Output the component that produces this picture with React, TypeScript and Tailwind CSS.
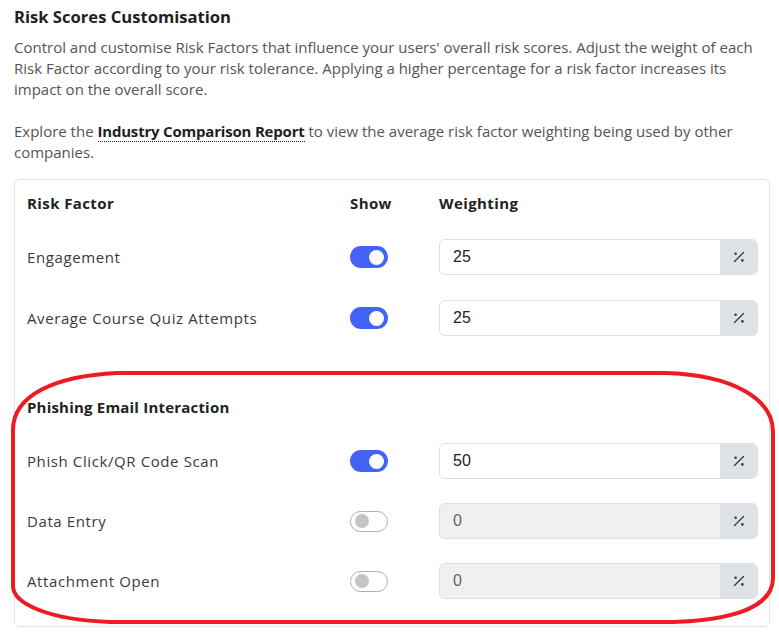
import React from "react";

const font = { fontFamily: '"Open Sans", "Noto Sans", sans-serif' };

function Toggle({ on }: { on: boolean }) {
  return on ? (
    <div className="flex h-[22px] w-[38px] items-center justify-end rounded-full bg-[#4263f5] px-[4px]">
      <div className="h-[15px] w-[15px] rounded-full bg-white" />
    </div>
  ) : (
    <div className="flex h-[21px] w-[38px] items-center justify-start rounded-full border border-[#a9b0b8] bg-white px-[4px]">
      <div className="h-[14px] w-[14px] rounded-full bg-[#c4c4c4]" />
    </div>
  );
}

function PercentIcon() {
  return (
    <svg width="12" height="12" viewBox="0 0 12 12" fill="none">
      <line x1="1.5" y1="10.5" x2="10.5" y2="1.5" stroke="#343a40" strokeWidth="1.3" strokeLinecap="round" />
      <circle cx="2.6" cy="2.8" r="1.3" fill="#343a40" />
      <circle cx="9.4" cy="9.4" r="1.3" fill="#343a40" />
    </svg>
  );
}

function Row({ label, on, value }: { label: string; on: boolean; value: string }) {
  return (
    <div className="grid h-[36px] grid-cols-[323px_89px_319px] items-center">
      <div className="whitespace-nowrap text-[15px] tracking-[0.6px] text-[#3a3a3a]" style={font}>
        {label}
      </div>
      <div>
        <Toggle on={on} />
      </div>
      <div
        className={`flex h-[36px] overflow-hidden rounded-[6px] border border-[#dcdfe3] ${
          on ? "bg-white" : "bg-[#eff0f2]"
        }`}
      >
        <div
          className={`flex flex-1 items-center pl-[13px] text-[16px] ${on ? "text-[#222]" : "text-[#666]"}`}
          style={{ fontFamily: '"Liberation Sans", Arial, sans-serif' }}
        >
          {value}
        </div>
        <div className="flex w-[37px] items-center justify-center bg-[#dee2e6]">
          <PercentIcon />
        </div>
      </div>
    </div>
  );
}

export default function App() {
  return (
    <div className="relative h-[643px] w-[779px] overflow-hidden bg-white" style={font}>
      <div className="pl-[14px] pt-[5px]">
        <h1 className="text-[16.6px] font-bold leading-[24px] text-[#1f1f1f]">Risk Scores Customisation</h1>
        <p className="mt-[8px] text-[15px] leading-[21px] text-[#555]">
          <span className="block whitespace-nowrap">
            Control and customise Risk Factors that influence your users' overall risk scores. Adjust the weight of each
          </span>
          <span className="block whitespace-nowrap">
            Risk Factor according to your risk tolerance. Applying a higher percentage for a risk factor increases its
          </span>
          <span className="block whitespace-nowrap">impact on the overall score.</span>
        </p>
        <p className="mt-[21px] text-[15px] leading-[21px] text-[#555]">
          <span className="block whitespace-nowrap">
            Explore the{" "}
            <span className="border-b border-dotted border-[#222] font-bold tracking-[-0.2px] text-[#1f1f1f]">
              Industry Comparison Report
            </span>{" "}
            to view the average risk factor weighting being used by other
          </span>
          <span className="block whitespace-nowrap">companies.</span>
        </p>
        <div className="mt-[16px] w-[756px] rounded-[6px] border border-[#e2e4e8] pb-[27px] pl-[12px] pr-[11px] pt-[12px]">
          <div className="grid h-[21px] grid-cols-[323px_89px_319px] items-center text-[15px] font-bold tracking-[0.4px] text-[#222]">
            <div>Risk Factor</div>
            <div>Show</div>
            <div>Weighting</div>
          </div>
          <div className="mt-[26px] flex flex-col gap-[25px]">
            <Row label="Engagement" on value="25" />
            <Row label="Average Course Quiz Attempts" on value="25" />
          </div>
          <div className="mt-[61px] h-[21px] text-[15px] font-bold leading-[21px] tracking-[0.2px] text-[#222]">
            Phishing Email Interaction
          </div>
          <div className="mt-[25px] flex flex-col gap-[24px]">
            <Row label="Phish Click/QR Code Scan" on value="50" />
            <Row label="Data Entry" on={false} value="0" />
            <Row label="Attachment Open" on={false} value="0" />
          </div>
        </div>
      </div>
      <svg
        className="pointer-events-none absolute left-0 top-0"
        width="779"
        height="643"
        viewBox="0 0 779 643"
        fill="none"
      >
        <path
          d="M 117 373 L 665 373 C 735 375, 773 400, 773 432 L 773 578 C 773 608, 730 620, 673 622 L 110 622 C 50 620, 13 604, 13 586 L 13 430 C 13 395, 55 376, 117 373 Z"
          stroke="#ed1c24"
          strokeWidth="4"
        />
      </svg>
    </div>
  );
}
